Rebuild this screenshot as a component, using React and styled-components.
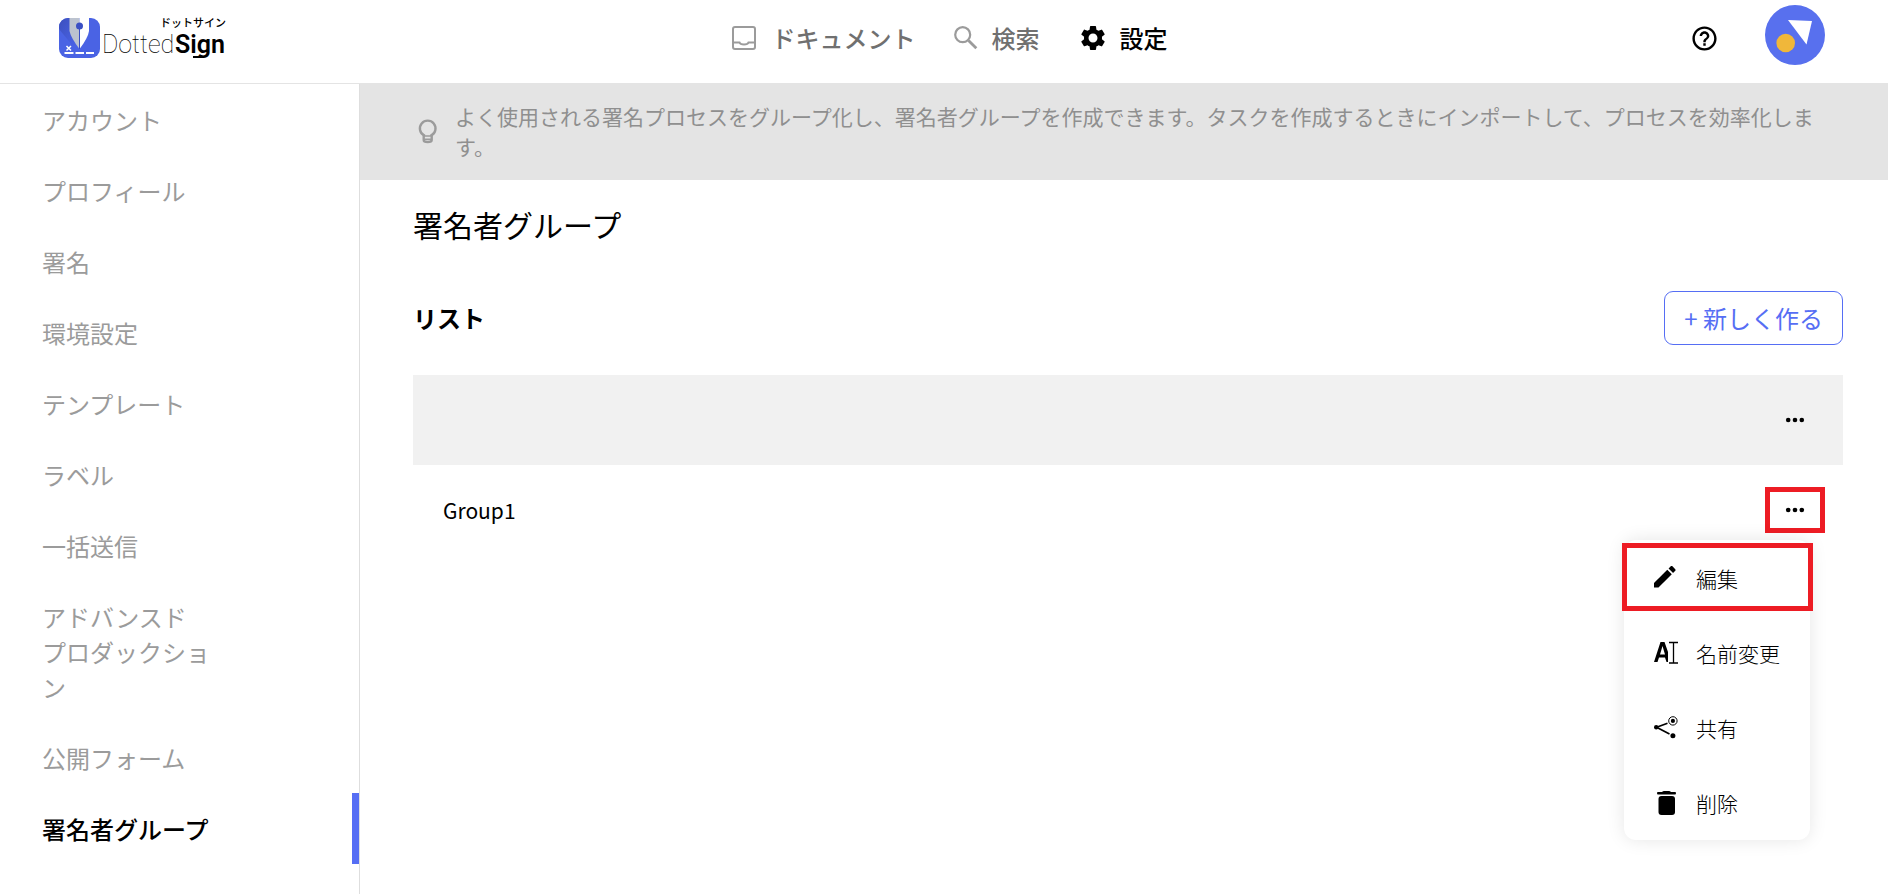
import React from 'react';
import styled, { createGlobalStyle } from 'styled-components';
import { MdSettings, MdHelpOutline } from 'react-icons/md';

const GlobalStyle = createGlobalStyle`
  * {
    box-sizing: border-box;
  }

  body {
    margin: 0;
    background: #fff;
    color: #000;
    font-family: 'Noto Sans CJK JP', 'Noto Sans', sans-serif;
  }

  a {
    color: inherit;
    text-decoration: none;
  }

  button {
    font-family: inherit;
    cursor: pointer;
  }
`;

const Page = styled.div`
  min-height: 100vh;
  display: flex;
  flex-direction: column;
`;

const Header = styled.header`
  height: 84px;
  display: grid;
  grid-template-columns: 1fr auto 1fr;
  align-items: start;
  padding: 0 63px 0 58px;
  border-bottom: 1px solid #e4e4e4;
`;

const Logo = styled.a`
  justify-self: start;
  padding-top: 15px;

  svg {
    display: block;
  }
`;

const TopNav = styled.nav`
  display: flex;
  gap: 38px;
  padding: 20px 0 0 16px;
`;

const TopLink = styled.a`
  display: flex;
  align-items: center;
  gap: ${props => props.$gap || 12}px;
  font-size: 24px;
  font-weight: 500;
  line-height: 36px;
  color: ${props => (props.$active ? '#000' : '#707070')};

  svg {
    flex: none;
    color: ${props => (props.$active ? '#000' : '#9b9b9b')};
  }
`;

const HeaderActions = styled.div`
  justify-self: end;
  display: flex;
  gap: 46px;
  padding-top: 5px;
`;

const IconButton = styled.button`
  display: flex;
  align-items: center;
  justify-content: center;
  padding: 0;
  border: none;
  background: none;
  color: #000;
`;

const HelpButton = styled(IconButton)`
  padding-top: 6px;
`;

const Body = styled.div`
  flex: 1;
  display: flex;
`;

const Sidebar = styled.nav`
  flex: none;
  width: 360px;
  border-right: 1px solid #dedede;
`;

const SideLink = styled.a`
  display: block;
  padding: 18px 140px 18px 42px;
  border-right: 7px solid ${props => (props.$active ? '#566ef4' : 'transparent')};
  font-size: 24px;
  line-height: 35px;
  font-weight: ${props => (props.$active ? 500 : 400)};
  color: ${props => (props.$active ? '#000' : '#9b9b9b')};
  white-space: pre-line;
`;

const Main = styled.main`
  flex: 1;
  min-width: 0;
`;

const Banner = styled.div`
  display: flex;
  align-items: center;
  gap: 14px;
  padding: 17px 60px 19px 54px;
  background: #e4e4e4;
  color: #8f8f8f;

  svg {
    flex: none;
  }

  p {
    margin: 0;
    font-size: 21px;
    line-height: 30px;
  }
`;

const Content = styled.div`
  padding: 22px 45px 0 53px;
`;

const Title = styled.h1`
  margin: 0;
  font-size: 30px;
  font-weight: 400;
  line-height: 45px;
`;

const ListBar = styled.div`
  display: flex;
  align-items: center;
  justify-content: space-between;
  margin: 44px 0 30px;
`;

const ListTitle = styled.h2`
  margin: 0;
  font-size: 24px;
  font-weight: 700;
  line-height: 36px;
`;

const CreateButton = styled.button`
  height: 54px;
  padding: 0 19px;
  border: 1px solid #566ef4;
  border-radius: 9px;
  background: #fff;
  color: #566ef4;
  font-size: 24px;
  font-weight: 400;
  line-height: 36px;
`;

const Table = styled.table`
  width: 100%;
  border-collapse: collapse;
`;

const Row = styled.tr`
  height: 90px;
  background: ${props => (props.$head ? '#f1f1f1' : '#fff')};
`;

const NameCell = styled.td`
  padding: 0 30px;
  font-size: 21px;
  line-height: 30px;
`;

const ActionCell = styled.td`
  width: 78px;
  padding: 0 18px 0 0;
`;

const MoreButton = styled(IconButton)`
  width: 60px;
  height: 46px;
  border: 5px solid ${props => (props.$marked ? '#ed1c24' : 'transparent')};
`;

const MenuAnchor = styled.div`
  position: relative;
`;

const Menu = styled.div`
  position: absolute;
  top: 53px;
  right: 15px;
  width: 186px;
  border-radius: 12px;
  background: #fff;
  box-shadow: 0 0 18px rgba(0, 0, 0, 0.1);
`;

const MenuItem = styled.button`
  position: relative;
  display: flex;
  align-items: center;
  gap: 18px;
  width: 100%;
  height: 75px;
  padding: 0 30px;
  border: none;
  background: none;
  color: #000;
  font-size: 21px;
  font-weight: 300;
  line-height: 30px;
  white-space: nowrap;

  svg {
    flex: none;
  }
`;

const Highlight = styled.span`
  position: absolute;
  inset: 3px -3px 4px -2px;
  border: 5px solid #ed1c24;
`;

const LogoMark = () => (
  <svg width="172" height="46" viewBox="0 0 172 46" role="img" aria-label="DottedSign">
    <defs>
      <linearGradient id="mark" x1="0" y1="0" x2="1" y2="1">
        <stop offset="0" stopColor="#3c50bd" />
        <stop offset="1" stopColor="#4c66ee" />
      </linearGradient>
      <clipPath id="markClip">
        <rect x="1" y="3" width="41" height="40" rx="9" />
      </clipPath>
    </defs>
    <g clipPath="url(#markClip)">
      <rect x="1" y="3" width="41" height="40" fill="#4a63e4" />
      <path d="M1 3 H12 V18 L21.500 34 L14 30 L1 14Z" fill="url(#mark)" />
      <path d="M11.500 3 V16 Q13 23 21.500 34 V3Z" fill="#bcc3cf" />
      <path d="M31 3 V16 Q30 23 21.500 34 V3Z" fill="#fff" />
      <rect x="21" y="11" width="1" height="23" fill="#3a4fc4" />
      <circle cx="21.500" cy="11" r="3.500" fill="#3a4fc4" />
      <path d="M8.500 31 L13 35.500 M13 31 L8.500 35.500" stroke="#fff" strokeWidth="1.500" />
      <path d="M6.500 38 H15.500 M17.500 38 H26 M28 38 H36" stroke="#fff" strokeWidth="1.800" />
    </g>
    <text x="44" y="38" fontFamily="Roboto, sans-serif" fontSize="25" fontWeight="100">Dotted</text>
    <text x="117" y="38" fontFamily="Roboto, sans-serif" fontSize="25" fontWeight="600">Sign</text>
    <text x="102" y="12" fontSize="11" fontWeight="500">ドットサイン</text>
    <path d="M135 42 H146" stroke="#000" strokeWidth="2" />
  </svg>
);

const InboxIcon = () => (
  <svg width="24" height="24" viewBox="0 0 24 24" fill="none" stroke="currentColor" strokeWidth="2">
    <rect x="1" y="1" width="22" height="22" rx="2" />
    <path d="M1 16.500 H7.500 C8.500 19.300 15.500 19.300 16.500 16.500 H23" />
  </svg>
);

const SearchIcon = () => (
  <svg width="24" height="24" viewBox="0 0 24 24" fill="none" stroke="currentColor">
    <circle cx="8.700" cy="8.700" r="7.500" strokeWidth="2.200" />
    <path d="M14.500 14.500 L22.300 22.300" strokeWidth="2.800" />
  </svg>
);

const BulbIcon = () => (
  <svg width="27" height="27" viewBox="0 0 27 27" fill="none" stroke="#9b9b9b" strokeWidth="2.400">
    <path d="M10 18 V17.300 A7.800 7.800 0 1 1 17.400 17.300 V18" />
    <path d="M9.700 16.800 V22 Q9.700 24 13.700 24 Q17.700 24 17.700 22 V16.800" />
    <path d="M9.700 18 H17.700 M9.700 21.200 H17.700" strokeWidth="1.600" />
  </svg>
);

const Avatar = () => (
  <svg width="60" height="60" viewBox="0 0 60 60">
    <circle cx="30" cy="30" r="30" fill="#5870ee" />
    <path d="M23 15 L47 16 L41.500 39.500Z" fill="#fff" />
    <circle cx="20.700" cy="38" r="9.300" fill="#f0b73a" />
  </svg>
);

const DotsIcon = () => (
  <svg width="20" height="6" viewBox="0 0 20 6">
    <circle cx="3.200" cy="3" r="2.300" />
    <circle cx="10" cy="3" r="2.300" />
    <circle cx="16.800" cy="3" r="2.300" />
  </svg>
);

const EditIcon = () => (
  <svg width="24" height="24" viewBox="3 3 20 20">
    <path d="M3 17.250V21h3.750L17.810 9.940l-3.750-3.750L3 17.250zM20.710 7.040c.39-.39.39-1.020 0-1.410l-2.340-2.340c-.39-.39-1.020-.39-1.410 0l-1.830 1.830 3.750 3.750 1.830-1.830z" />
  </svg>
);

const RenameIcon = () => (
  <svg width="24" height="24" viewBox="0 0 24 24">
    <path d="M0 21 L6.500 1 H10.500 L14 11 V21 H12.500 L11 16.500 H5 L3.500 21Z M8.500 5 L6 13.500 H11Z" fillRule="evenodd" />
    <path d="M15 1.500 H24 M15 22 H24 M19.500 1.500 V22" stroke="#000" strokeWidth="1.300" />
  </svg>
);

const ShareIcon = () => (
  <svg width="24" height="24" viewBox="0 0 24 24">
    <path d="M4 10.800 L13.500 7.200 M4 12 L15.500 18" stroke="#000" strokeWidth="1.700" />
    <circle cx="2.200" cy="11.300" r="2.200" />
    <circle cx="18.900" cy="19.800" r="2.500" />
    <circle cx="18.900" cy="4.900" r="2.100" />
    <circle cx="18.900" cy="4.900" r="4.200" fill="none" stroke="#000" />
  </svg>
);

const TrashIcon = () => (
  <svg width="24" height="24" viewBox="0 0 24 24">
    <path d="M3 2 Q3 1 4 1 H8 Q9 0 10 0 H15 Q16 0 17 1 H21 Q22 1 22 2 Q22 3.500 21 3.500 H4 Q3 3.500 3 2Z" />
    <path d="M4.500 8 Q4.500 5 7.500 5 H18 Q21 5 21 8 V21 Q21 24 18 24 H7.500 Q4.500 24 4.500 21Z" />
  </svg>
);

const sideItems = [
  'アカウント',
  'プロフィール',
  '署名',
  '環境設定',
  'テンプレート',
  'ラベル',
  '一括送信',
  'アドバンスド\nプロダックション',
  '公開フォーム',
  '署名者グループ'
];

const menuItems = [
  { label: '編集', icon: <EditIcon />, marked: true },
  { label: '名前変更', icon: <RenameIcon /> },
  { label: '共有', icon: <ShareIcon /> },
  { label: '削除', icon: <TrashIcon /> }
];

const App = () => (
  <Page>
    <GlobalStyle />
    <Header>
      <Logo href="#">
        <LogoMark />
      </Logo>
      <TopNav>
        <TopLink href="#" $gap={16}>
          <InboxIcon />
          ドキュメント
        </TopLink>
        <TopLink href="#" $gap={14}>
          <SearchIcon />
          検索
        </TopLink>
        <TopLink href="#" $active>
          <MdSettings size={30} />
          設定
        </TopLink>
      </TopNav>
      <HeaderActions>
        <HelpButton aria-label="ヘルプ">
          <MdHelpOutline size={29} />
        </HelpButton>
        <IconButton aria-label="プロフィール">
          <Avatar />
        </IconButton>
      </HeaderActions>
    </Header>
    <Body>
      <Sidebar>
        {sideItems.map((item, index) => (
          <SideLink key={item} href="#" $active={index === sideItems.length - 1}>
            {item}
          </SideLink>
        ))}
      </Sidebar>
      <Main>
        <Banner>
          <BulbIcon />
          <p>
            よく使用される署名プロセスをグループ化し、署名者グループを作成できます。タスクを作成するときにインポートして、プロセスを効率化します。
          </p>
        </Banner>
        <Content>
          <Title>署名者グループ</Title>
          <ListBar>
            <ListTitle>リスト</ListTitle>
            <CreateButton>+ 新しく作る</CreateButton>
          </ListBar>
          <Table>
            <thead>
              <Row $head>
                <NameCell />
                <ActionCell>
                  <MoreButton aria-label="メニュー">
                    <DotsIcon />
                  </MoreButton>
                </ActionCell>
              </Row>
            </thead>
            <tbody>
              <Row>
                <NameCell>Group1</NameCell>
                <ActionCell>
                  <MenuAnchor>
                    <MoreButton aria-label="メニュー" $marked>
                      <DotsIcon />
                    </MoreButton>
                    <Menu>
                      {menuItems.map(item => (
                        <MenuItem key={item.label}>
                          {item.icon}
                          {item.label}
                          {item.marked && <Highlight />}
                        </MenuItem>
                      ))}
                    </Menu>
                  </MenuAnchor>
                </ActionCell>
              </Row>
            </tbody>
          </Table>
        </Content>
      </Main>
    </Body>
  </Page>
);

export default App;
